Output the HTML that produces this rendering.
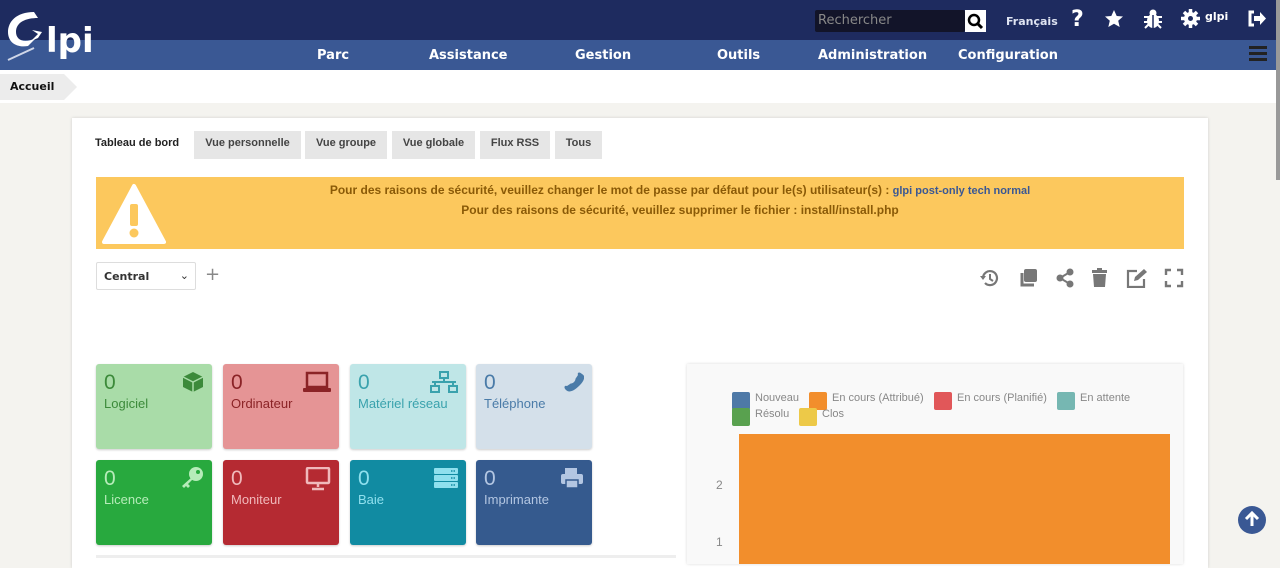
<!DOCTYPE html>
<html><head><meta charset="utf-8"><style>
*{box-sizing:border-box;margin:0;padding:0}
body{width:1280px;height:558px;overflow:hidden;background:#f4f3ef;font-family:"Liberation Sans","DejaVu Sans",sans-serif;position:relative}
.top{position:absolute;left:0;top:0;width:1280px;height:40px;background:#1e2b5f}
.nav{position:absolute;left:0;top:40px;width:1280px;height:30px;background:#3a5894}
.nav span{position:absolute;top:8px;color:#fff;font:bold 13px "DejaVu Sans",sans-serif}
.bc{position:absolute;left:0;top:70px;width:1276px;height:33px;background:#fff}
.bc div{position:absolute;left:0;top:4px;height:26px;width:64px;background:#ececec;font:bold 11px "DejaVu Sans",sans-serif;padding:6px 10px;color:#111}
.bc div:after{content:"";position:absolute;right:-13px;top:0;border-left:13px solid #ececec;border-top:13px solid transparent;border-bottom:13px solid transparent}
.card{position:absolute;left:72px;top:118px;width:1136px;height:450px;background:#fff;box-shadow:0 0 3px rgba(0,0,0,.15)}
.tab{position:absolute;top:131px;height:28px;background:#e6e6e6;font:bold 11px "Liberation Sans",sans-serif;color:#444;padding:6px 0;text-align:center;white-space:nowrap}
.warn{position:absolute;left:96px;top:177px;width:1088px;height:72px;background:#fcc85d;color:#8a5a07;font:bold 12px "Liberation Sans",sans-serif}
.warn .t{position:absolute;left:80px;width:1008px;text-align:center;white-space:nowrap}
.tile{position:absolute;width:116px;height:85px;border-radius:3px;box-shadow:0 1px 2px rgba(0,0,0,.2);padding:7px 8px;font-family:"Liberation Sans",sans-serif}
.tile b{display:block;font-weight:normal;font-size:21px;line-height:24px}
.tile i{font-style:normal;font-size:13px}
.tile svg{position:absolute;right:8px;top:7px}
.ic{position:absolute;top:268px}
.leg{position:absolute;font:11px "Liberation Sans",sans-serif;color:#888}
.sw{position:absolute;width:18px;height:18px;border-radius:2px}
</style></head><body>
<div class="top"></div>
<div class="nav">
<span style="left:317px">Parc</span><span style="left:429px">Assistance</span><span style="left:575px">Gestion</span><span style="left:717px">Outils</span><span style="left:818px">Administration</span><span style="left:958px">Configuration</span>
<div style="position:absolute;left:1249px;top:6px;width:18px;height:3px;background:#222;box-shadow:0 6px 0 #222,0 12px 0 #222"></div>
</div>
<svg style="position:absolute;left:4px;top:8px" width="96" height="54"><path d="M30 4 C12 4 4 14 4 24 C4 34 12 40 24 38 L32 30 C20 36 12 32 12 24 C12 14 22 10 34 10 Z" fill="#fff"/><path d="M20 36 L34 30 L38 24 L28 22 L34 26 L26 34 Z" fill="#fff"/><path d="M4 52 L30 40" stroke="#cfd6e8" stroke-width="2"/><text x="42" y="44" fill="#fff" font-family="DejaVu Sans" font-weight="bold" font-size="34">lpi</text></svg>
<div style="position:absolute;left:815px;top:10px;width:150px;height:22px;background:#121429;border-radius:2px;color:#888;font:13px 'DejaVu Sans',sans-serif;padding:3px 3px">Rechercher</div>
<div style="position:absolute;left:965px;top:10px;width:21px;height:22px;background:#fff"><svg width="21" height="22"><circle cx="9" cy="10" r="5" fill="none" stroke="#000" stroke-width="2.5"/><path d="M12 13 L17 18" stroke="#000" stroke-width="3"/></svg></div>
<div style="position:absolute;left:1006px;top:15px;color:#dfe4f2;font:bold 11px 'DejaVu Sans',sans-serif">Français</div>
<div style="position:absolute;left:1071px;top:7px;color:#fff;font:bold 22px 'DejaVu Sans',sans-serif">?</div>
<svg style="position:absolute;left:1104px;top:9px" width="20" height="20"><path d="M10 1l2.7 6 6.3.5-4.8 4.2 1.5 6.3L10 14.7 4.3 18l1.5-6.3L1 7.5l6.3-.5z" fill="#fff"/></svg>
<svg style="position:absolute;left:1143px;top:9px" width="20" height="20"><ellipse cx="10" cy="12" rx="6" ry="7" fill="#fff"/><circle cx="10" cy="4" r="3.5" fill="#fff"/><path d="M1 8h18M1 13h18M2 19l4-4M18 19l-4-4" stroke="#fff" stroke-width="2"/><path d="M10 6v13" stroke="#1e2b5f" stroke-width="1.5"/></svg>
<svg style="position:absolute;left:1181px;top:9px" width="19" height="19"><circle cx="9.5" cy="9.5" r="6.5" fill="#fff"/><path d="M9.5 0v19M0 9.5h19M3 3l13 13M16 3L3 16" stroke="#fff" stroke-width="3.5"/><circle cx="9.5" cy="9.5" r="2.5" fill="#1e2b5f"/></svg>
<div style="position:absolute;left:1205px;top:10px;color:#fff;font:bold 11px 'DejaVu Sans',sans-serif">glpi</div>
<svg style="position:absolute;left:1247px;top:10px" width="20" height="17"><path d="M7 2H3v13h4" stroke="#fff" stroke-width="3" fill="none"/><path d="M7 6h6V2l6 6.5-6 6.5v-4H7z" fill="#fff"/></svg>
<div style="position:absolute;left:1276px;top:0;width:4px;height:180px;background:#999"></div>
<div class="bc"><div>Accueil</div></div>
<div class="card"></div>
<div style="position:absolute;left:95px;top:137px;font:bold 11px 'Liberation Sans',sans-serif;color:#222">Tableau de bord</div>
<div class="tab" style="left:194px;width:107px">Vue personnelle</div>
<div class="tab" style="left:305px;width:82px">Vue groupe</div>
<div class="tab" style="left:392px;width:83px">Vue globale</div>
<div class="tab" style="left:480px;width:70px">Flux RSS</div>
<div class="tab" style="left:555px;width:47px">Tous</div>
<div class="warn">
<svg style="position:absolute;left:6px;top:5px" width="64" height="62"><path d="M32 4 L62 60 H2 Z" fill="#fff" stroke="#fff" stroke-width="4" stroke-linejoin="round"/><rect x="28" y="22" width="8" height="22" rx="2" fill="#fcc85d"/><circle cx="32" cy="51" r="4.5" fill="#fcc85d"/></svg>
<div class="t" style="top:6px">Pour des raisons de sécurité, veuillez changer le mot de passe par défaut pour le(s) utilisateur(s) : <span style="color:#3a5894;font-size:11px">glpi post-only tech normal</span></div>
<div class="t" style="top:26px">Pour des raisons de sécurité, veuillez supprimer le fichier : install/install.php</div>
</div>
<div style="position:absolute;left:96px;top:262px;width:100px;height:28px;border:1px solid #ddd;border-radius:2px;font:bold 11px 'DejaVu Sans',sans-serif;color:#333;padding:7px 7px">Central<span style="position:absolute;right:6px;top:6px;font-weight:normal">⌄</span></div>
<div style="position:absolute;left:205px;top:264px;font:18px 'DejaVu Sans',sans-serif;color:#888">+</div>
<svg class="ic" style="left:979px" width="20" height="20"><path d="M4 10a7 7 0 1 1 2 5" stroke="#777" stroke-width="2.2" fill="none"/><path d="M1 8l3 4 3-4z" fill="#777"/><path d="M11 6v5l3 2" stroke="#777" stroke-width="2" fill="none"/></svg>
<svg class="ic" style="left:1019px" width="20" height="20"><rect x="5" y="1" width="13" height="13" rx="2" fill="#777"/><path d="M3 5v12h12" stroke="#777" stroke-width="3" fill="none"/></svg>
<svg class="ic" style="left:1056px" width="20" height="20"><circle cx="14" cy="4" r="3.5" fill="#777"/><circle cx="4" cy="10" r="3.5" fill="#777"/><circle cx="14" cy="16" r="3.5" fill="#777"/><path d="M14 4L4 10l10 6" stroke="#777" stroke-width="2" fill="none"/></svg>
<svg class="ic" style="left:1090px" width="20" height="20"><rect x="2" y="2" width="15" height="3" fill="#777"/><rect x="7" y="0" width="5" height="3" fill="#777"/><path d="M3 6h13l-1 13H4z" fill="#777"/></svg>
<svg class="ic" style="left:1126px" width="22" height="20"><path d="M11 3H2v16h16v-8" stroke="#777" stroke-width="2.2" fill="none"/><path d="M8 13l1-4 9-8 3 3-9 8z" fill="#777"/></svg>
<svg class="ic" style="left:1164px" width="20" height="20"><path d="M2 7V2h5M13 2h5v5M18 13v5h-5M7 18H2v-5" stroke="#777" stroke-width="2.4" fill="none"/></svg>

<div class="tile" style="left:96px;top:364px;background:#a9dca8;color:#3c8a3a"><b>0</b><i>Logiciel</i><svg width="22" height="22"><path d="M11 1 L21 6 V16 L11 21 L1 16 V6 Z" fill="#3c8a3a"/><path d="M1 6L11 11 21 6M11 11v10" stroke="#a9dca8" stroke-width="1.5" fill="none"/></svg></div>
<div class="tile" style="left:223px;top:364px;background:#e59495;color:#8b2326"><b>0</b><i>Ordinateur</i><svg width="28" height="22"><rect x="4" y="2" width="20" height="14" fill="none" stroke="#8b2326" stroke-width="2.5"/><rect x="0" y="17" width="28" height="4" rx="1" fill="#8b2326"/></svg></div>
<div class="tile" style="left:350px;top:364px;background:#bfe6e7;color:#3aa2ad"><b>0</b><i>Matériel réseau</i><svg width="28" height="22"><rect x="10" y="1" width="8" height="6" fill="none" stroke="#3aa2ad" stroke-width="2"/><path d="M14 7v4M2 11h24M5 11v4M23 11v4" stroke="#3aa2ad" stroke-width="2"/><rect x="1" y="15" width="8" height="6" fill="none" stroke="#3aa2ad" stroke-width="2"/><rect x="19" y="15" width="8" height="6" fill="none" stroke="#3aa2ad" stroke-width="2"/></svg></div>
<div class="tile" style="left:476px;top:364px;background:#d4e0ea;color:#4a7ba8"><b>0</b><i>Téléphone</i><svg width="22" height="22"><path d="M20 3c-3-3-5-1-4 1l-2 3c-1 1 0 2-2 4s-3 1-4 2l-3 2c-2-1-4 1-1 4 4 4 10-1 14-5s6-9 2-11z" fill="#4a7ba8"/></svg></div>
<div class="tile" style="left:96px;top:460px;background:#28a93e;color:#b6ecb9"><b>0</b><i>Licence</i><svg width="24" height="22"><circle cx="16" cy="7" r="7" fill="#b6ecb9"/><circle cx="18" cy="5" r="2" fill="#28a93e"/><path d="M12 10L2 19l2 2 2-2 2 2 2-2-2-2 5-5z" fill="#b6ecb9"/></svg></div>
<div class="tile" style="left:223px;top:460px;background:#b52a32;color:#f0b9bb"><b>0</b><i>Moniteur</i><svg width="26" height="24"><rect x="2" y="1" width="22" height="15" rx="1" fill="none" stroke="#f0b9bb" stroke-width="2.5"/><path d="M13 16v4M7 22h12" stroke="#f0b9bb" stroke-width="2.5"/></svg></div>
<div class="tile" style="left:350px;top:460px;background:#118ba2;color:#8fe0ee"><b>0</b><i>Baie</i><svg width="24" height="22"><rect x="0" y="1" width="24" height="6" rx="1" fill="#8fe0ee"/><rect x="0" y="8" width="24" height="6" rx="1" fill="#8fe0ee"/><rect x="0" y="15" width="24" height="6" rx="1" fill="#8fe0ee"/><path d="M17 4h4M17 11h4M17 18h4" stroke="#118ba2" stroke-width="1.5" stroke-dasharray="1.5 1"/></svg></div>
<div class="tile" style="left:476px;top:460px;background:#355a8e;color:#b3c6e2"><b>0</b><i>Imprimante</i><svg width="24" height="22"><rect x="5" y="1" width="12" height="6" fill="#b3c6e2"/><rect x="1" y="7" width="22" height="10" rx="2" fill="#b3c6e2"/><rect x="6" y="13" width="12" height="8" fill="#b3c6e2" stroke="#355a8e" stroke-width="1.5"/></svg></div>
<div style="position:absolute;left:96px;top:555px;width:580px;height:3px;background:#eee"></div>

<div style="position:absolute;left:687px;top:364px;width:496px;height:200px;background:#f9f9f9;box-shadow:0 0 3px rgba(0,0,0,.15)"></div>
<div class="sw" style="left:732px;top:392px;background:#4e79a7"></div><div class="leg" style="left:755px;top:392px">Nouveau</div>
<div class="sw" style="left:809px;top:392px;background:#f28e2c"></div><div class="leg" style="left:832px;top:392px">En cours (Attribué)</div>
<div class="sw" style="left:934px;top:392px;background:#e15759"></div><div class="leg" style="left:957px;top:392px">En cours (Planifié)</div>
<div class="sw" style="left:1057px;top:392px;background:#76b7b2"></div><div class="leg" style="left:1080px;top:392px">En attente</div>
<div class="sw" style="left:732px;top:408px;background:#59a14f"></div><div class="leg" style="left:755px;top:408px">Résolu</div>
<div class="sw" style="left:799px;top:408px;background:#edc948"></div><div class="leg" style="left:822px;top:408px">Clos</div>
<div style="position:absolute;left:739px;top:434px;width:431px;height:130px;background:#f28e2c"></div>
<div class="leg" style="left:716px;top:478px;font-size:12px">2</div>
<div class="leg" style="left:716px;top:535px;font-size:12px">1</div>
<div style="position:absolute;left:1238px;top:506px;width:28px;height:28px;border-radius:50%;background:#3a5894"><svg width="28" height="28"><path d="M14 20V8M8 13l6-6 6 6" stroke="#fff" stroke-width="3" fill="none"/></svg></div>
</body></html>
